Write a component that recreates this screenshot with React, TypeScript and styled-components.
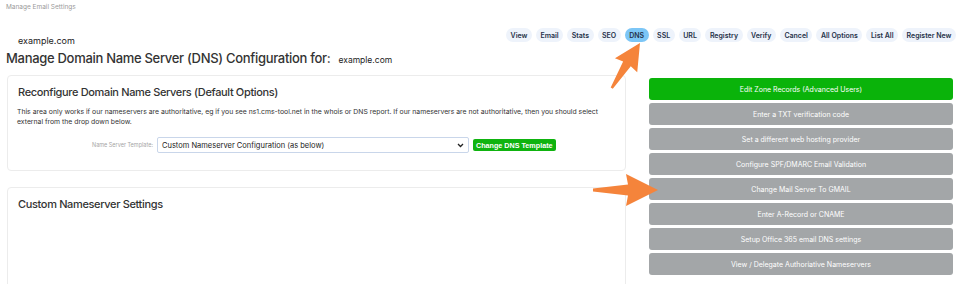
import React from "react";
import styled, { createGlobalStyle } from "styled-components";

const GlobalStyle = createGlobalStyle`
  html, body {
    margin: 0;
    padding: 0;
    background: #ffffff;
    font-family: Inter, "Noto Sans", sans-serif;
    color: #2b2b2b;
  }
`;

// Mise en page
const Page = styled.div`
  position: relative;
  width: 960px;
  height: 284px;
  overflow: hidden;
`;

const Crumb = styled.div`
  padding: 3px 0 0 6px;
  font-size: 6.5px;
  color: #9a9a9a;
  height: 12px;
`;

const TopRow = styled.div`
  display: flex;
  align-items: center;
  justify-content: space-between;
  padding: 12px 4px 0 18px;
  height: 16px;
`;

const Domain = styled.span`
  font-size: 9px;
  color: #222;
  margin-top: 10px;
`;

const Nav = styled.nav`
  display: flex;
  gap: 4px;
`;

const Pill = styled.span<{ $active?: boolean }>`
  display: inline-flex;
  align-items: center;
  height: 14px;
  padding: 0 4.5px;
  border-radius: 7px;
  font-size: 7px;
  font-weight: 600;
  color: #26324a;
  background: ${(p) => (p.$active ? "#7cc6f6" : "#eef3fb")};
`;

const Title = styled.h1`
  margin: 0;
  padding: 7px 0 0 6px;
  font-size: 13px;
  line-height: 16px;
  letter-spacing: -0.3px;
  font-weight: 500;
  color: #333;
  display: flex;
  align-items: baseline;
  gap: 8px;
`;

const TitleDomain = styled.span`
  font-size: 8.5px;
  letter-spacing: 0;
  font-weight: 400;
  color: #222;
`;

const Columns = styled.div`
  display: grid;
  grid-template-columns: 619px 304px;
  column-gap: 23px;
  padding: 7px 0 0 7px;
`;

const LeftCol = styled.div`
  display: flex;
  flex-direction: column;
  gap: 16px;
`;

const Card = styled.section<{ $tall?: boolean }>`
  border: 1px solid #ececec;
  border-radius: 4px;
  padding: 9px 10px 17px 9px;
  min-height: ${(p) => (p.$tall ? "120px" : "auto")};
`;

const CardTitle = styled.h2`
  margin: 0 0 0 1px;
  font-size: 11px;
  line-height: 14px;
  letter-spacing: -0.35px;
  font-weight: 500;
  color: #333;
`;

const Text = styled.p`
  margin: 8px 0 11px 0;
  font-size: 6.85px;
  line-height: 9.5px;
  color: #333;
`;

const FormRow = styled.div`
  display: flex;
  align-items: center;
  gap: 4px;
  padding-left: 75px;
`;

const Label = styled.label`
  font-size: 5.5px;
  color: #a5a5a5;
`;

const Select = styled.div`
  width: 312px;
  height: 16px;
  box-sizing: border-box;
  border: 1px solid #c9d6ea;
  border-radius: 2px;
  display: flex;
  align-items: center;
  justify-content: space-between;
  padding: 0 4px 0 4px;
  font-size: 7.5px;
  color: #222;
`;

const GreenButton = styled.span`
  display: inline-flex;
  align-items: center;
  height: 12px;
  padding: 0 3px;
  border-radius: 2px;
  background: #0fb30f;
  color: #fff;
  font-family: "Liberation Sans", Arial, sans-serif;
  font-weight: 700;
  font-size: 7.2px;
`;

const RightCol = styled.div`
  display: flex;
  flex-direction: column;
  gap: 3px;
  padding-top: 3px;
`;

const Action = styled.div<{ $primary?: boolean }>`
  height: 22px;
  border-radius: 3px;
  display: flex;
  align-items: center;
  justify-content: center;
  font-size: 7px;
  color: #fff;
  background: ${(p) => (p.$primary ? "#0ab30a" : "#a3a6a8")};
`;

const Overlay = styled.svg`
  position: absolute;
  left: 0;
  top: 0;
  pointer-events: none;
`;

const pills = ["View", "Email", "Stats", "SEO", "DNS", "SSL", "URL", "Registry", "Verify", "Cancel", "All Options", "List All", "Register New"];

const actions = [
  "Edit Zone Records (Advanced Users)",
  "Enter a TXT verification code",
  "Set a different web hosting provider",
  "Configure SPF/DMARC Email Validation",
  "Change Mail Server To GMAIL",
  "Enter A-Record or CNAME",
  "Setup Office 365 email DNS settings",
  "View / Delegate Authoriative Nameservers",
];

const arrowPoints = "-65,-1.5 -30,-5.5 -32,-16 0,0 -32,16 -30,5.5 -65,1.5";

export default function App() {
  return (
    <Page>
      <GlobalStyle />
      <Crumb>Manage Email Settings</Crumb>

      <TopRow>
        <Domain>example.com</Domain>
        <Nav>
          {pills.map((p) => (
            <Pill key={p} $active={p === "DNS"}>{p}</Pill>
          ))}
        </Nav>
      </TopRow>

      <Title>
        Manage Domain Name Server (DNS) Configuration for:
        <TitleDomain>example.com</TitleDomain>
      </Title>

      <Columns>
        <LeftCol>
          <Card>
            <CardTitle>Reconfigure Domain Name Servers (Default Options)</CardTitle>
            <Text>
              This area only works if our nameservers are authoritative, eg if you see ns1.cms-tool.net in the whois or DNS report. If our nameservers are not authoritative, then you should select external from the drop down below.
            </Text>
            <FormRow>
              <Label>Name Server Template:</Label>
              <Select>
                Custom Nameserver Configuration (as below)
                <svg width="7" height="5" viewBox="0 0 7 5">
                  <path d="M1 1 L3.5 3.5 L6 1" fill="none" stroke="#222" strokeWidth="1.3" />
                </svg>
              </Select>
              <GreenButton>Change DNS Template</GreenButton>
            </FormRow>
          </Card>

          <Card $tall>
            <CardTitle>Custom Nameserver Settings</CardTitle>
          </Card>
        </LeftCol>

        <RightCol>
          {actions.map((a, i) => (
            <Action key={a} $primary={i === 0}>{a}</Action>
          ))}
        </RightCol>
      </Columns>

      {/* Flèches d'annotation */}
      <Overlay width="960" height="284" viewBox="0 0 960 284">
        <polygon points={arrowPoints} fill="#f5843b" transform="translate(640,43) rotate(-58) scale(0.82)" />
        <polygon points={arrowPoints} fill="#f5843b" transform="translate(658,190)" />
      </Overlay>
    </Page>
  );
}
